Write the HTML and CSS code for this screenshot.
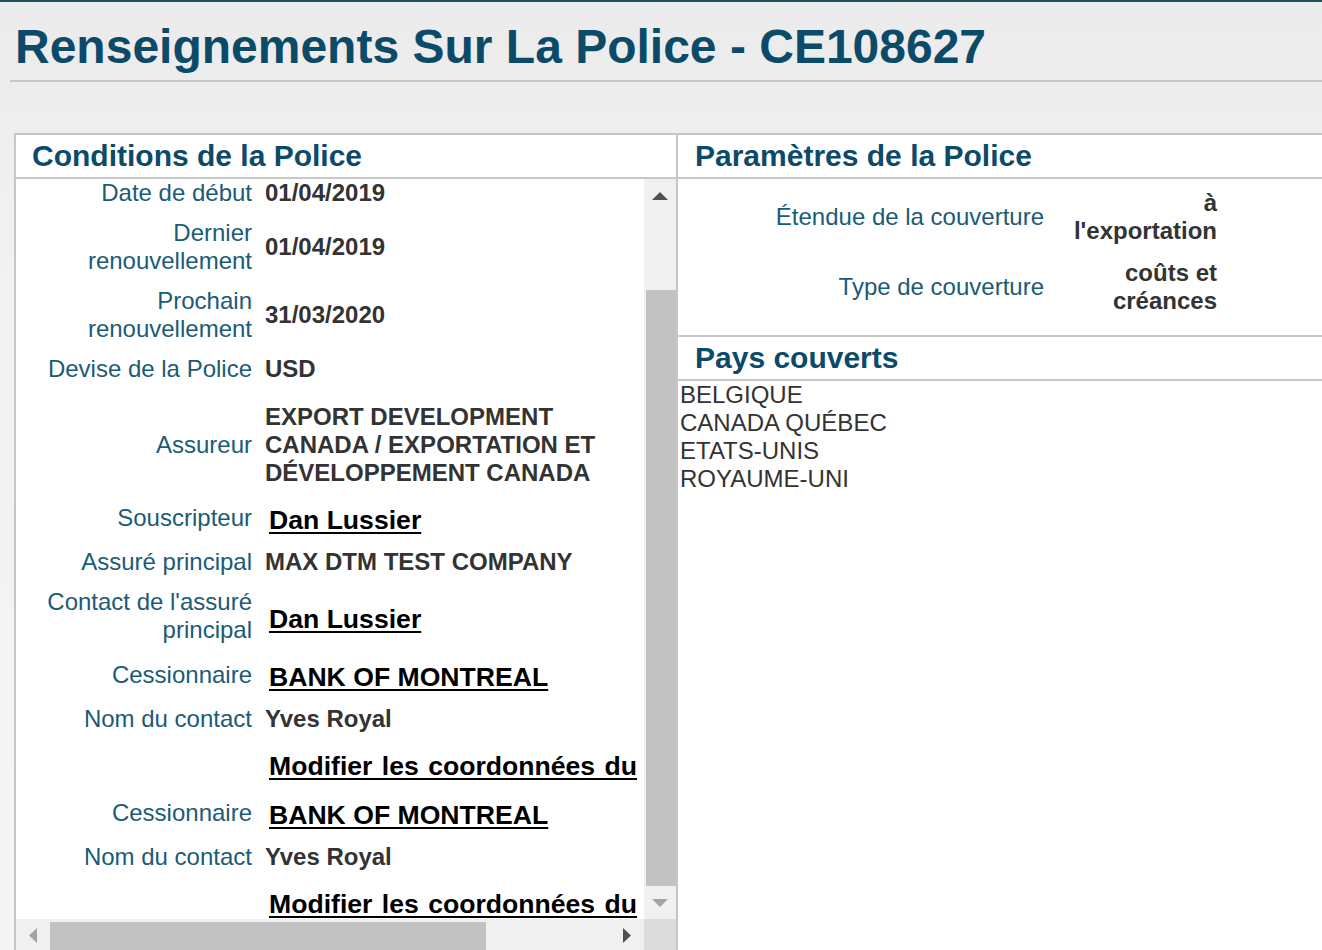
FILE: index.html
```html
<!DOCTYPE html>
<html lang="fr">
<head>
    <meta charset="UTF-8">
    <meta name="viewport" content="width=device-width, initial-scale=1.0">
    <title>Renseignements Sur La Police - CE108627</title>
    <link rel="stylesheet" href="styles.css">
</head>
<body>
    <div class="page">
        <h1 class="page-title">Renseignements Sur La Police - CE108627</h1>

        <div class="panels">
            <section class="panel panel-conditions">
                <h2 class="panel-title">Conditions de la Police</h2>
                <div class="scroll-view">
                    <div class="scroll-content">
                        <table class="details">
                            <colgroup>
                                <col class="col-label">
                                <col>
                            </colgroup>
                            <tbody>
                                <tr>
                                    <td class="lbl">Date de début</td>
                                    <td class="val">01/04/2019</td>
                                </tr>
                                <tr>
                                    <td class="lbl">Dernier renouvellement</td>
                                    <td class="val">01/04/2019</td>
                                </tr>
                                <tr>
                                    <td class="lbl">Prochain renouvellement</td>
                                    <td class="val">31/03/2020</td>
                                </tr>
                                <tr>
                                    <td class="lbl">Devise de la Police</td>
                                    <td class="val">USD</td>
                                </tr>
                                <tr class="row-tall">
                                    <td class="lbl">Assureur</td>
                                    <td class="val"><div class="val-wrap">EXPORT DEVELOPMENT CANADA / EXPORTATION ET DÉVELOPPEMENT CANADA</div></td>
                                </tr>
                                <tr>
                                    <td class="lbl">Souscripteur</td>
                                    <td class="val val-link"><a href="#">Dan Lussier</a></td>
                                </tr>
                                <tr>
                                    <td class="lbl">Assuré principal</td>
                                    <td class="val">MAX DTM TEST COMPANY</td>
                                </tr>
                                <tr>
                                    <td class="lbl">Contact de l'assuré principal</td>
                                    <td class="val val-link"><a href="#">Dan Lussier</a></td>
                                </tr>
                                <tr>
                                    <td class="lbl">Cessionnaire</td>
                                    <td class="val val-link"><a href="#">BANK OF MONTREAL</a></td>
                                </tr>
                                <tr>
                                    <td class="lbl">Nom du contact</td>
                                    <td class="val">Yves Royal</td>
                                </tr>
                                <tr>
                                    <td class="lbl"></td>
                                    <td class="val val-link"><a href="#" class="edit-link">Modifier les coordonnées du</a></td>
                                </tr>
                                <tr>
                                    <td class="lbl">Cessionnaire</td>
                                    <td class="val val-link"><a href="#">BANK OF MONTREAL</a></td>
                                </tr>
                                <tr>
                                    <td class="lbl">Nom du contact</td>
                                    <td class="val">Yves Royal</td>
                                </tr>
                                <tr>
                                    <td class="lbl"></td>
                                    <td class="val val-link"><a href="#" class="edit-link">Modifier les coordonnées du</a></td>
                                </tr>
                            </tbody>
                        </table>
                    </div>

                    <!-- fake scrollbars, content is scrolled to the bottom -->
                    <div class="vscroll">
                        <div class="sb-btn">
                            <svg width="16" height="8" viewBox="0 0 16 8"><polygon points="0,8 8,0 16,8" fill="#505050"/></svg>
                        </div>
                        <div class="sb-track sb-track-v">
                            <div class="sb-thumb-v"></div>
                        </div>
                        <div class="sb-btn">
                            <svg width="16" height="8" viewBox="0 0 16 8"><polygon points="0,0 16,0 8,8" fill="#a3a3a3"/></svg>
                        </div>
                    </div>
                    <div class="hscroll">
                        <div class="sb-btn sb-btn-h">
                            <svg width="8" height="15" viewBox="0 0 8 15"><polygon points="8,0 8,15 0,7.5" fill="#a3a3a3"/></svg>
                        </div>
                        <div class="sb-track sb-track-h">
                            <div class="sb-thumb-h"></div>
                        </div>
                        <div class="sb-btn sb-btn-h">
                            <svg width="8" height="15" viewBox="0 0 8 15"><polygon points="0,0 8,7.5 0,15" fill="#505050"/></svg>
                        </div>
                    </div>
                    <div class="sb-corner"></div>
                </div>
            </section>

            <section class="panel panel-params">
                <h2 class="panel-title">Paramètres de la Police</h2>
                <div class="params">
                    <div class="param-row">
                        <div class="param-lbl">Étendue de la couverture</div>
                        <div class="param-val">à l'exportation</div>
                    </div>
                    <div class="param-row">
                        <div class="param-lbl">Type de couverture</div>
                        <div class="param-val">coûts et créances</div>
                    </div>
                </div>
                <h2 class="panel-title">Pays couverts</h2>
                <ul class="countries">
                    <li>BELGIQUE</li>
                    <li>CANADA QUÉBEC</li>
                    <li>ETATS-UNIS</li>
                    <li>ROYAUME-UNI</li>
                </ul>
            </section>
        </div>
    </div>
</body>
</html>
```

FILE: styles.css
```css
html, body {
    margin: 0;
    padding: 0;
    overflow: hidden;
}
body {
    font-family: "Liberation Sans", Arial, sans-serif;
    background: linear-gradient(to bottom, #ebebeb 0, #f2f2f2 300px, #f5f5f5 100%);
    color: #333;
}
.page {
    border-top: 2px solid #1f4f63;
    height: 948px;
}
.page-title {
    margin: 0 0 0 10px;
    padding: 17px 0 5px 5px;
    font-size: 48px;
    line-height: 56px;
    font-weight: bold;
    color: #0c4a6a;
    border-bottom: 2px solid #c8c8c8;
}
.panels {
    display: flex;
    margin: 51px 0 0 14px;
}
.panel {
    background: #fff;
    border-top: 2px solid #c6c6c6;
}
.panel-conditions {
    width: 664px;
    box-sizing: border-box;
    border-left: 2px solid #c6c6c6;
    border-right: 2px solid #c6c6c6;
}
.panel-params {
    flex: 1;
    min-height: 820px;
}
.panel-title {
    margin: 0;
    padding-left: 16px;
    height: 42px;
    line-height: 42px;
    font-size: 30px;
    font-weight: bold;
    color: #0c4a6a;
    border-bottom: 2px solid #c8c8c8;
}
.panel-params .panel-title {
    padding-left: 17px;
}

/* scroll view */
.scroll-view {
    display: grid;
    grid-template-columns: 628px 32px;
    grid-template-rows: 740px 32px;
}
.scroll-content {
    overflow: hidden;
}
.details {
    table-layout: fixed;
    width: 628px;
    border-collapse: collapse;
    margin-top: -6px;
}
.col-label {
    width: 236px;
}
.details td {
    padding: 6px 0;
    vertical-align: middle;
    line-height: 28px;
}
.lbl {
    text-align: right;
    font-size: 24px;
    color: #1b5b76;
}
.val {
    padding-left: 13px !important;
    font-size: 24px;
    font-weight: bold;
    color: #333;
}
.val-wrap {
    max-width: 340px;
}
.row-tall td {
    padding-top: 14px;
    padding-bottom: 6px;
}
.details td.val-link {
    padding: 13px 0 7px 17px !important;
    white-space: nowrap;
}
.val-link a {
    font-size: 26.6px;
    color: #000;
    text-decoration: underline;
    text-decoration-thickness: 2px;
    text-underline-offset: 3px;
}
.val-link a.edit-link {
    word-spacing: 2px;
}

.vscroll {
    display: flex;
    flex-direction: column;
    background: #f0f0f0;
}
.sb-btn {
    display: flex;
    align-items: center;
    justify-content: center;
    height: 33px;
    flex: none;
}
.sb-track-v {
    flex: 1;
    display: flex;
    flex-direction: column;
    justify-content: flex-end;
}
.sb-thumb-v {
    height: 596px;
    margin-left: 2px;
    background: #c1c1c1;
}
.hscroll {
    display: flex;
    background: #f0f0f0;
}
.sb-btn-h {
    height: auto;
    width: 34px;
}
.sb-track-h {
    flex: 1;
    padding-top: 3px;
}
.sb-thumb-h {
    width: 436px;
    height: 100%;
    background: #c1c1c1;
}
.sb-corner {
    background: #dcdcdc;
}

/* params */
.params {
    padding: 3px 0 13px;
    border-bottom: 2px solid #c8c8c8;
}
.param-row {
    display: grid;
    grid-template-columns: 366px 157px;
    column-gap: 16px;
    align-items: center;
    padding: 7px 0;
    line-height: 28px;
}
.param-lbl {
    text-align: right;
    font-size: 24px;
    color: #1b5b76;
}
.param-val {
    text-align: right;
    font-size: 24px;
    font-weight: bold;
    color: #333;
}
.countries {
    list-style: none;
    margin: 0;
    padding: 0 0 0 2px;
    font-size: 24px;
    line-height: 28px;
    color: #333;
}
```
